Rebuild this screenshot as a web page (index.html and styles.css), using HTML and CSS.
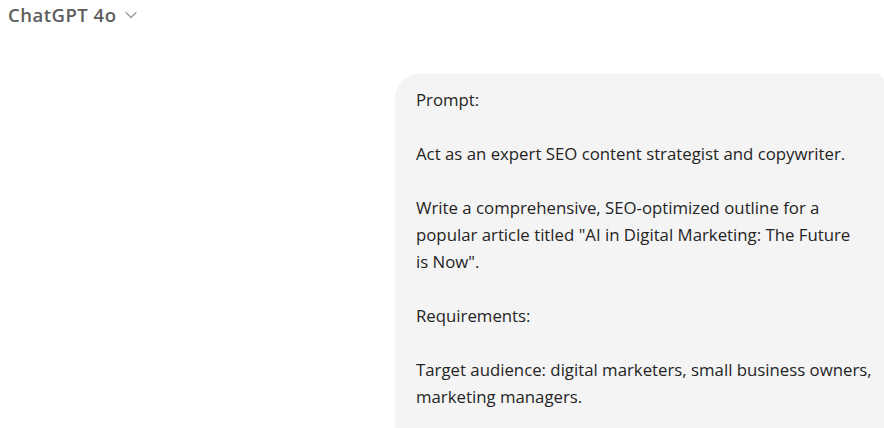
FILE: index.html
```html
<!DOCTYPE html>
<html lang="en">
<head>
<meta charset="utf-8">
<title>ChatGPT 4o</title>
<link rel="stylesheet" href="styles.css">
</head>
<body>
<header class="topbar">
  <button class="model-picker" type="button">
    <span class="model-name">ChatGPT 4o</span>
    <svg class="chevron" width="12" height="8" viewBox="0 0 12 8" aria-hidden="true"><path d="M1 1.5 L6 6.5 L11 1.5" fill="none" stroke="currentColor" stroke-width="1.3" stroke-linecap="round" stroke-linejoin="round"/></svg>
  </button>
</header>
<main class="thread">
  <div class="bubble">
    <p>Prompt:</p>
    <p>Act as an expert SEO content strategist and copywriter.</p>
    <p>Write a comprehensive, SEO-optimized outline for a popular article titled "AI in Digital Marketing: The Future<br>is Now".</p>
    <p>Requirements:</p>
    <p>Target audience: digital marketers, small business owners, marketing managers.</p>
  </div>
</main>
</body>
</html>
```
FILE: styles.css
```css
html, body {
  margin: 0;
  padding: 0;
  overflow: hidden;
  background: #ffffff;
}
body {
  width: 884px;
  height: 428px;
  font-family: "Open Sans", "Noto Sans", sans-serif;
}
.topbar {
  display: flex;
  align-items: center;
  padding: 3px 0 0 8px;
  height: 24px;
}
.model-picker {
  display: flex;
  align-items: center;
  gap: 9px;
  border: 0;
  background: none;
  padding: 0;
  font: inherit;
  cursor: pointer;
}
.model-name {
  font-size: 18.5px;
  font-weight: 600;
  letter-spacing: 0.5px;
  line-height: 24px;
  color: #5d5d5d;
}
.chevron {
  color: #9a9a9a;
  margin-top: -1px;
}
.thread {
  display: flex;
  justify-content: flex-end;
  margin-top: 47px;
}
.bubble {
  box-sizing: border-box;
  width: 489px;
  background: #f4f4f4;
  border-radius: 24px 8px 24px 24px;
  padding: 12px 8px 40px 21px;
  font-size: 16.8px;
  line-height: 27px;
  color: #242424;
}
.bubble p {
  margin: 0 0 27px 0;
}
.bubble p:last-child {
  margin-bottom: 0;
}
```
